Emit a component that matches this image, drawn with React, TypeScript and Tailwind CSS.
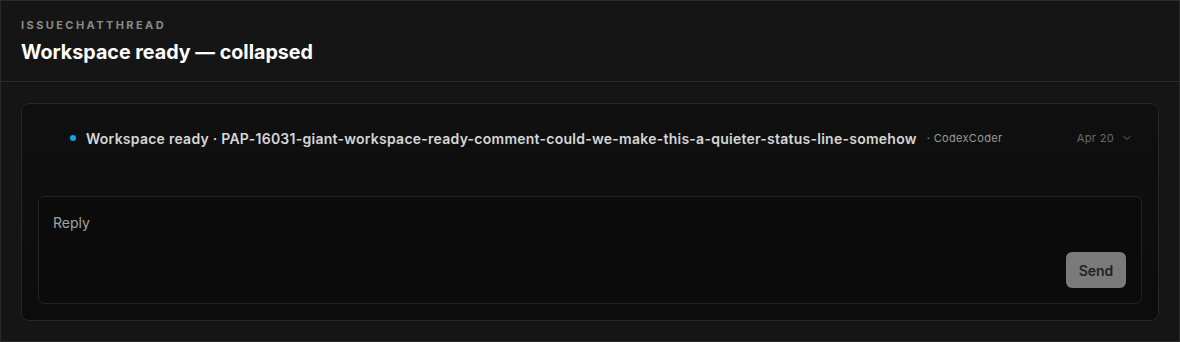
import React from "react";
import { ChevronDown } from "lucide-react";

const App: React.FC = () => {
  return (
    <div
      className="w-[1180px] h-[342px] bg-[#151515] border border-[#2a2a2a] flex flex-col overflow-hidden"
      style={{ fontFamily: "Inter, 'Noto Sans', sans-serif" }}
    >
      {/* Header */}
      <div className="h-[81px] border-b border-[#2a2a2a] px-5 pt-[17px] shrink-0">
        <div className="text-[11px] font-bold tracking-[0.22em] text-[#8a8a8a] leading-[14px]">
          ISSUECHATTHREAD
        </div>
        <h1 className="mt-[8px] text-[19.7px] font-bold text-white leading-[25px]">
          Workspace ready — collapsed
        </h1>
      </div>

      {/* Body */}
      <div className="px-5 pt-[21px] pb-[21px] flex-1">
        <div className="h-[218px] rounded-lg border border-[#262626] bg-gradient-to-b from-[#101010] to-[#0c0c0c] p-4 flex flex-col">
          {/* Collapsed status line */}
          <div className="h-[36px] flex items-center pl-8 pr-[9px] shrink-0">
            <span className="w-[6px] h-[6px] rounded-full bg-[#0ea5e9] shrink-0" />
            <span className="ml-[10px] text-[14px] font-semibold tracking-[0.018em] text-[#d6d6d6] whitespace-nowrap">
              Workspace ready · PAP-16031-giant-workspace-ready-comment-could-we-make-this-a-quieter-status-line-somehow
            </span>
            <span className="ml-[10px] text-[11px] tracking-[0.03em] text-[#9a9a9a] whitespace-nowrap">· CodexCoder</span>
            <span className="ml-auto text-[11px] tracking-[0.03em] text-[#6b6b6b] whitespace-nowrap">Apr 20</span>
            <ChevronDown size={12} className="ml-[7px] text-[#6b6b6b]" strokeWidth={2} />
          </div>

          {/* Reply box */}
          <div className="mt-auto h-[108px] rounded-md border border-[#232323] bg-[#0b0b0b] px-[14px] pt-[16px] pb-[15px] flex flex-col">
            <div className="text-[14px] text-[#a3a3a3] leading-[20px]">Reply</div>
            <div className="mt-auto flex justify-end">
              <button className="w-[60px] h-[36px] mr-px rounded-md bg-[#7a7a7a] text-[14px] font-semibold text-[#1f2228]">
                Send
              </button>
            </div>
          </div>
        </div>
      </div>
    </div>
  );
};

export default App;
